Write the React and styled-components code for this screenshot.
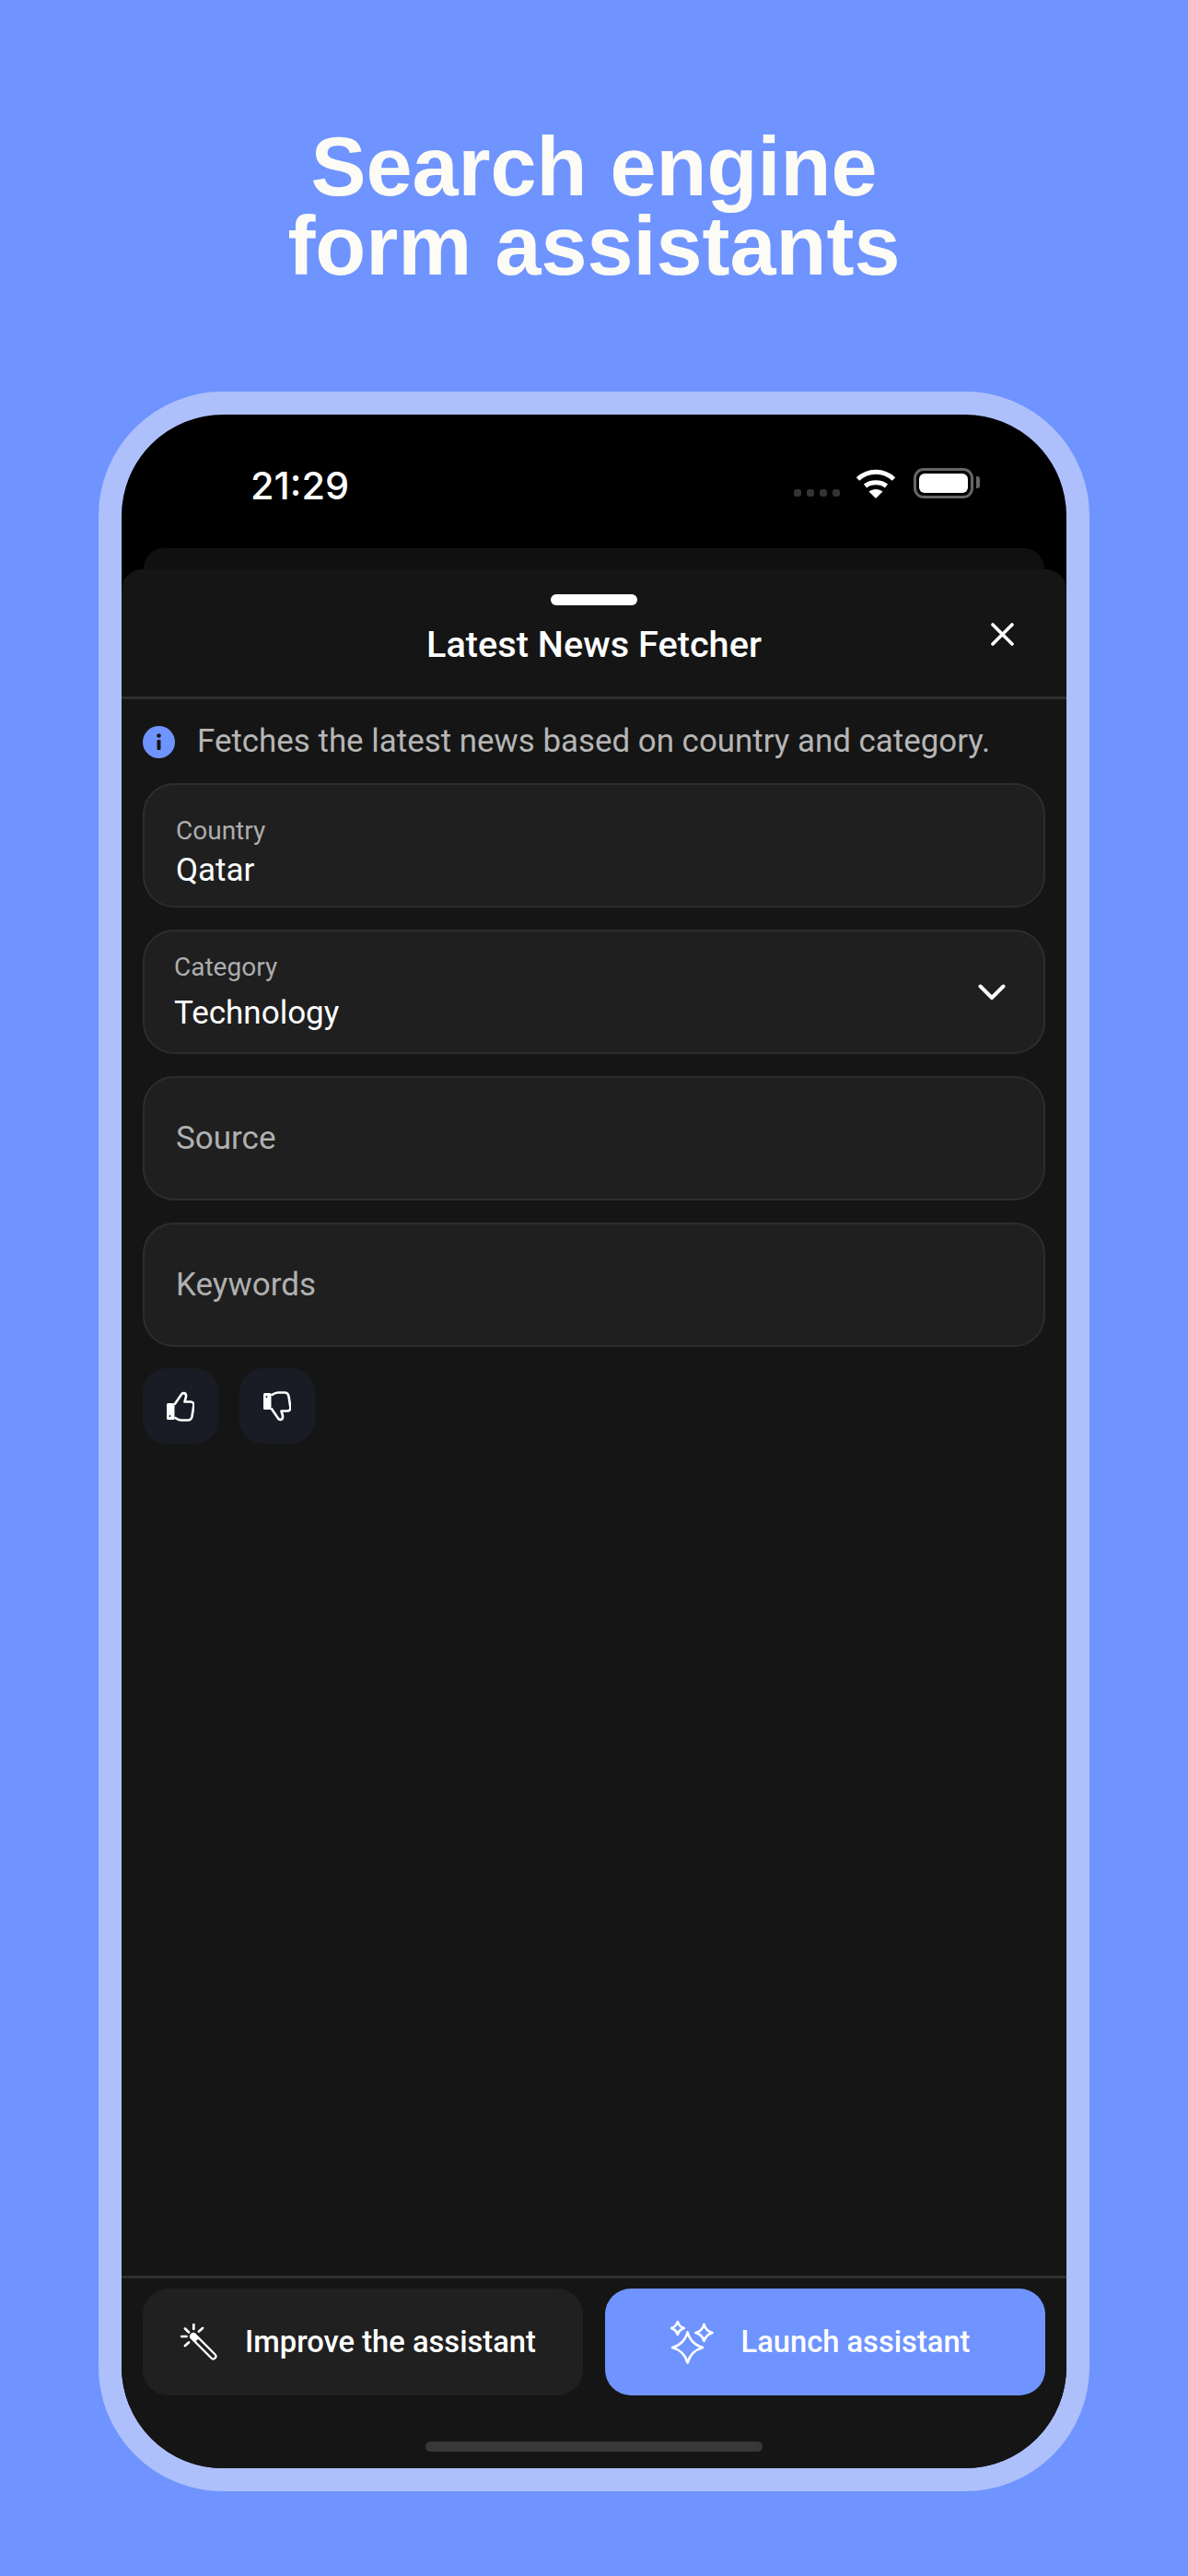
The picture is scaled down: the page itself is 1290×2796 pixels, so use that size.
import styled, { createGlobalStyle } from "styled-components";

const GlobalStyle = createGlobalStyle`
  html, body {
    margin: 0;
    padding: 0;
    background: #6f94ff;
  }
  body {
    font-family: "Roboto", "Liberation Sans", sans-serif;
  }
`;

const Page = styled.main`
  width: 1290px;
  height: 2796px;
  box-sizing: border-box;
  background: #6f94ff;
  padding-top: 138px;
  overflow: hidden;
`;

const Headline = styled.h1`
  margin: 0 0 115px;
  font-family: "Liberation Sans", Arial, sans-serif;
  font-size: 90px;
  line-height: 86px;
  font-weight: 700;
  color: #fcfbf6;
  text-align: center;
`;

const Phone = styled.section`
  width: 1076px;
  height: 2279px;
  box-sizing: border-box;
  margin: 0 auto;
  border: 25px solid #aec0fb;
  border-radius: 135px;
  background: #000;
  overflow: hidden;
  display: flex;
  flex-direction: column;
`;

const StatusBar = styled.div`
  height: 145px;
  flex: none;
  display: flex;
  align-items: flex-start;
  justify-content: space-between;
  padding: 52px 101px 0 140px;
  box-sizing: border-box;
`;

const Time = styled.span`
  font-family: "Inter", "Roboto", sans-serif;
  font-size: 41.5px;
  line-height: 50px;
  font-weight: 500;
  color: #fff;
`;

const StatusIcons = styled.div`
  display: flex;
  align-items: flex-end;
  height: 35px;
  margin-top: 4px;
`;

const Signal = styled.div`
  display: flex;
  gap: 6px;
  margin: 0 17px 2px 0;
`;

const SignalDot = styled.i`
  width: 8px;
  height: 8px;
  border-radius: 3px;
  background: #333;
`;

const Battery = styled.div`
  position: relative;
  width: 65px;
  height: 33px;
  box-sizing: border-box;
  margin-left: 19px;
  padding: 3px;
  border: 3px solid #666;
  border-radius: 11px;

  &::before {
    content: "";
    display: block;
    height: 100%;
    background: #fff;
    border-radius: 6px;
  }

  &::after {
    content: "";
    position: absolute;
    top: 6px;
    right: -10px;
    width: 4px;
    height: 13px;
    border-radius: 0 3px 3px 0;
    background: #666;
  }
`;

const BackSheet = styled.div`
  height: 23px;
  flex: none;
  margin: 0 24px;
  background: #101010;
  border-radius: 22px 22px 0 0;
`;

const Sheet = styled.div`
  flex: 1;
  min-height: 0;
  display: flex;
  flex-direction: column;
  background: #151515;
  border-radius: 22px 22px 0 0;
`;

const SheetHeader = styled.header`
  position: relative;
  height: 141px;
  flex: none;
  box-sizing: border-box;
  border-bottom: 3px solid #2e2e2e;
  padding-top: 27px;
  text-align: center;
`;

const Handle = styled.div`
  width: 94px;
  height: 12px;
  margin: 0 auto;
  background: #fff;
  border-radius: 6px;
`;

const Title = styled.h2`
  margin: 19px 0 0;
  font-size: 39.7px;
  line-height: 48px;
  font-weight: 500;
  color: #fff;
`;

const CloseIcon = styled.svg`
  position: absolute;
  top: 58px;
  right: 57px;
  width: 25px;
  height: 25px;
`;

const Body = styled.div`
  flex: 1;
  min-height: 0;
  padding: 28px 23px 0;
`;

const InfoRow = styled.div`
  display: flex;
  align-items: center;
  gap: 24px;
  height: 36px;
  margin-bottom: 27px;
  font-size: 34.9px;
  line-height: 36px;
  color: #b6b6b6;
  white-space: nowrap;
`;

const InfoIcon = styled.svg`
  width: 35px;
  height: 35px;
  flex: none;
`;

const Fields = styled.div`
  display: grid;
  gap: 24px;
`;

const Field = styled.div`
  position: relative;
  height: 135px;
  box-sizing: border-box;
  display: flex;
  flex-direction: column;
  justify-content: center;
  padding: ${(p) => p.$top || 0}px 34px 0 ${(p) => p.$left || 34}px;
  background: #1f1f1f;
  border: 2px solid #2d2d2d;
  border-radius: 34px;
`;

const FieldLabel = styled.span`
  font-size: 28px;
  line-height: 34px;
  color: #adadad;
`;

const FieldValue = styled.span`
  margin-top: ${(p) => p.$gap}px;
  font-size: 35px;
  line-height: 42px;
  color: #fff;
`;

const Placeholder = styled.span`
  font-size: 35px;
  line-height: 42px;
  color: #b0b0b0;
`;

const Chevron = styled.svg`
  position: absolute;
  right: 41px;
  top: 57px;
  width: 30px;
  height: 18px;
`;

const Rating = styled.div`
  display: flex;
  gap: 23px;
  margin-top: 23px;
`;

const RateButton = styled.button`
  width: 82px;
  height: 82px;
  padding: 0;
  border: none;
  border-radius: 26px;
  background: #191c24;
  display: flex;
  align-items: center;
  justify-content: center;
`;

const ThumbIcon = styled.svg`
  width: 30px;
  height: 33px;
  transform: ${(p) => (p.$down ? "scaleY(-1)" : "none")};
`;

const Footer = styled.footer`
  flex: none;
  height: 209px;
  box-sizing: border-box;
  border-top: 3px solid #2e2e2e;
  padding: 11px 23px 0;
  display: flex;
  flex-direction: column;
  align-items: center;
`;

const Actions = styled.div`
  display: grid;
  grid-template-columns: 478px 478px;
  gap: 24px;
`;

const ActionButton = styled.button`
  height: 116px;
  border: none;
  border-radius: 28px;
  padding: 0 10px 0 0;
  display: flex;
  align-items: center;
  justify-content: center;
  gap: ${(p) => p.$gap}px;
  background: ${(p) => (p.$primary ? "#6f94ff" : "#202020")};
  color: #fff;
  font-family: inherit;
  font-size: 32.7px;
  font-weight: 500;
`;

const HomeBar = styled.div`
  width: 366px;
  height: 11px;
  margin-top: 50px;
  border-radius: 6px;
  background: #383838;
`;

// four point star with concave sides
const star = (x, y, r) =>
  `M${x} ${y - r}Q${x + r * 0.22} ${y - r * 0.22} ${x + r} ${y}Q${x + r * 0.22} ${y + r * 0.22} ${x} ${y + r}Q${x - r * 0.22} ${y + r * 0.22} ${x - r} ${y}Q${x - r * 0.22} ${y - r * 0.22} ${x} ${y - r}Z`;

const Wifi = () => (
  <svg width="44" height="33" viewBox="0 0 44 33" fill="none">
    <path d="M2.5 12C13.5 1.5 30.5 1.5 41.5 12" stroke="#fff" strokeWidth="5" />
    <path d="M10.5 19.5C16.5 14.5 27.5 14.5 33.5 19.5" stroke="#fff" strokeWidth="5" />
    <path d="M22 33L14.5 25.5C19 22 25 22 29.5 25.5Z" fill="#fff" />
  </svg>
);

const Thumb = ({ down }) => (
  <ThumbIcon $down={down} viewBox="0 0 30 33" fill="none">
    <rect x="0" y="13" width="8.5" height="18" rx="1.5" fill="#fff" />
    <circle cx="3.5" cy="27" r="1" fill="#191c24" />
    <path
      d="M8.5 14.5L16 3.5C17.2 1.4 20.6 1.6 21 4.5C21.3 7 20 9 19.5 11.5H26C28.5 11.5 29.8 13.5 29.3 16L27.5 27.5C27 30 25.5 31.5 23 31.5H16C13 31.5 11 30 8.5 28.5"
      stroke="#fff"
      strokeWidth="2.6"
      strokeLinejoin="round"
    />
  </ThumbIcon>
);

const Wand = () => (
  <svg width="40" height="40" viewBox="0 0 40 40" fill="none" strokeLinecap="round">
    <path d="M14 14L35.5 35.5" stroke="#fff" strokeWidth="8" />
    <path d="M19 19L35.5 35.5" stroke="#202020" strokeWidth="3.4" />
    <path
      d="M14.3 1V6M20 8.5L24 5M1 14H6.5M5 24L9 20.5M5 5.5L9 9.5"
      stroke="#fff"
      strokeWidth="2.7"
    />
  </svg>
);

const Sparkles = () => (
  <svg width="47" height="47" viewBox="0 0 47 47" fill="none" stroke="#fff" strokeWidth="2.7" strokeLinejoin="round">
    <path d={star(18.6, 29, 16.5)} />
    <path d={star(7.8, 8, 7)} />
    <path d={star(36.5, 13, 9)} />
  </svg>
);

const App = () => {
  return (
    <Page>
      <GlobalStyle />
      <Headline>
        Search engine
        <br />
        form assistants
      </Headline>
      <Phone>
        <StatusBar>
          <Time>21:29</Time>
          <StatusIcons>
            <Signal>
              <SignalDot />
              <SignalDot />
              <SignalDot />
              <SignalDot />
            </Signal>
            <Wifi />
            <Battery />
          </StatusIcons>
        </StatusBar>
        <BackSheet />
        <Sheet>
          <SheetHeader>
            <Handle />
            <Title>Latest News Fetcher</Title>
            <CloseIcon viewBox="0 0 25 25" fill="none" stroke="#fff" strokeWidth="3.6" strokeLinecap="round">
              <path d="M2 2L23 23M23 2L2 23" />
            </CloseIcon>
          </SheetHeader>
          <Body>
            <InfoRow>
              <InfoIcon viewBox="0 0 35 35">
                <circle cx="17.5" cy="17.5" r="17.5" fill="#6f94ff" />
                <rect x="15.5" y="15" width="4" height="11" rx="1" fill="#151515" />
                <circle cx="17.5" cy="10.5" r="2.3" fill="#151515" />
              </InfoIcon>
              Fetches the latest news based on country and category.
            </InfoRow>
            <Fields>
              <Field $top={15}>
                <FieldLabel>Country</FieldLabel>
                <FieldValue $gap={5}>Qatar</FieldValue>
              </Field>
              <Field $left={32}>
                <FieldLabel>Category</FieldLabel>
                <FieldValue $gap={12}>Technology</FieldValue>
                <Chevron viewBox="0 0 30 18" fill="none" stroke="#fff" strokeWidth="4" strokeLinecap="round" strokeLinejoin="round">
                  <path d="M2.5 2.5L15 15L27.5 2.5" />
                </Chevron>
              </Field>
              <Field>
                <Placeholder>Source</Placeholder>
              </Field>
              <Field>
                <Placeholder>Keywords</Placeholder>
              </Field>
            </Fields>
            <Rating>
              <RateButton>
                <Thumb />
              </RateButton>
              <RateButton>
                <Thumb down />
              </RateButton>
            </Rating>
          </Body>
          <Footer>
            <Actions>
              <ActionButton $gap={30}>
                <Wand />
                Improve the assistant
              </ActionButton>
              <ActionButton $primary $gap={29}>
                <Sparkles />
                Launch assistant
              </ActionButton>
            </Actions>
            <HomeBar />
          </Footer>
        </Sheet>
      </Phone>
    </Page>
  );
};

export default App;
